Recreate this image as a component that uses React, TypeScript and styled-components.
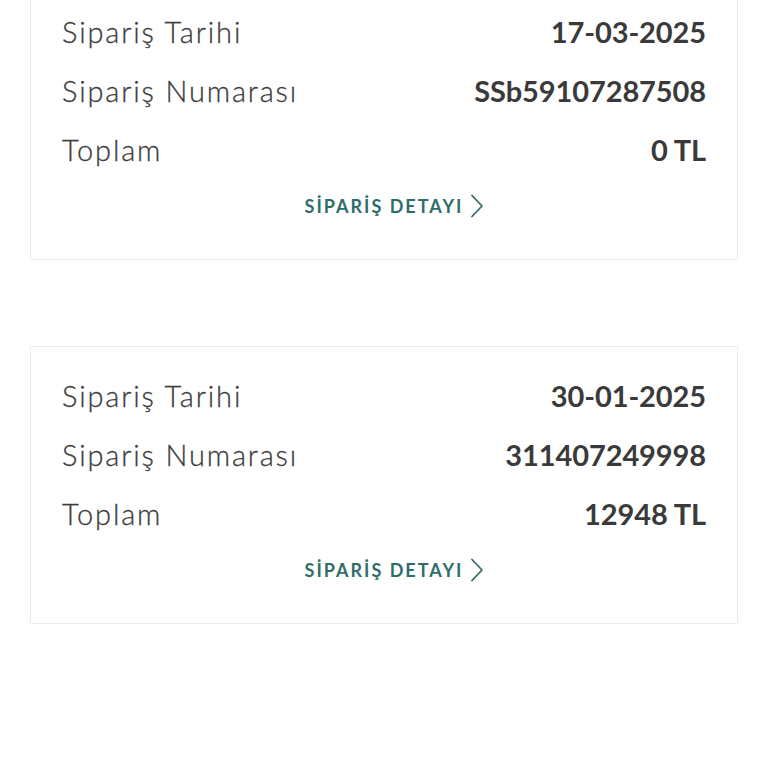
import React from "react";
import styled, { createGlobalStyle } from "styled-components";

const GlobalStyle = createGlobalStyle`
  html, body {
    margin: 0;
    padding: 0;
    background: #ffffff;
  }
  body {
    font-family: Lato, "Noto Sans", sans-serif;
    -webkit-font-smoothing: antialiased;
  }
`;

const OrderList = styled.div`
  display: flex;
  flex-direction: column;
  gap: 86px;
  padding: 0 30px 120px;
  margin-top: -18px;
`;

const OrderCard = styled.div`
  background: #ffffff;
  border: 1px solid #ececec;
  padding: 19px 31px 38px;
  display: flex;
  flex-direction: column;
`;

const Row = styled.div`
  display: flex;
  justify-content: space-between;
  align-items: center;
  height: 59px;
`;

const Label = styled.span`
  font-size: 29px;
  font-weight: 300;
  color: #3c3c3c;
  letter-spacing: 1.85px;
  -webkit-text-stroke: 0.3px #3c3c3c;
`;

const Value = styled.span`
  font-size: 29px;
  font-weight: 700;
  color: #3a3a3a;
  letter-spacing: -0.1px;
`;

const DetailLink = styled.a`
  align-self: center;
  margin-top: 12px;
  height: 30px;
  display: inline-flex;
  align-items: center;
  gap: 6px;
  padding-left: 22px;
  font-size: 18px;
  font-weight: 700;
  letter-spacing: 2px;
  color: #2f6d6c;
  text-decoration: none;
  cursor: pointer;
`;

const Chevron = () => (
  <svg width="16" height="26" viewBox="0 0 16 26" fill="none">
    <polyline
      points="3,2.5 13,13 3,23.5"
      stroke="#2f6d6c"
      strokeWidth="1.8"
      strokeLinecap="round"
      strokeLinejoin="round"
    />
  </svg>
);

type Order = {
  date: string;
  number: string;
  total: string;
};

const orders: Order[] = [
  { date: "17-03-2025", number: "SSb59107287508", total: "0 TL" },
  { date: "30-01-2025", number: "311407249998", total: "12948 TL" },
];

const OrderSummary: React.FC<{ order: Order }> = ({ order }) => (
  <OrderCard>
    <Row>
      <Label>Sipariş Tarihi</Label>
      <Value>{order.date}</Value>
    </Row>
    <Row>
      <Label>Sipariş Numarası</Label>
      <Value>{order.number}</Value>
    </Row>
    <Row>
      <Label>Toplam</Label>
      <Value>{order.total}</Value>
    </Row>
    <DetailLink>
      SİPARİŞ DETAYI
      <Chevron />
    </DetailLink>
  </OrderCard>
);

export default function App() {
  return (
    <>
      <GlobalStyle />
      <OrderList>
        {orders.map((o) => (
          <OrderSummary key={o.number} order={o} />
        ))}
      </OrderList>
    </>
  );
}
